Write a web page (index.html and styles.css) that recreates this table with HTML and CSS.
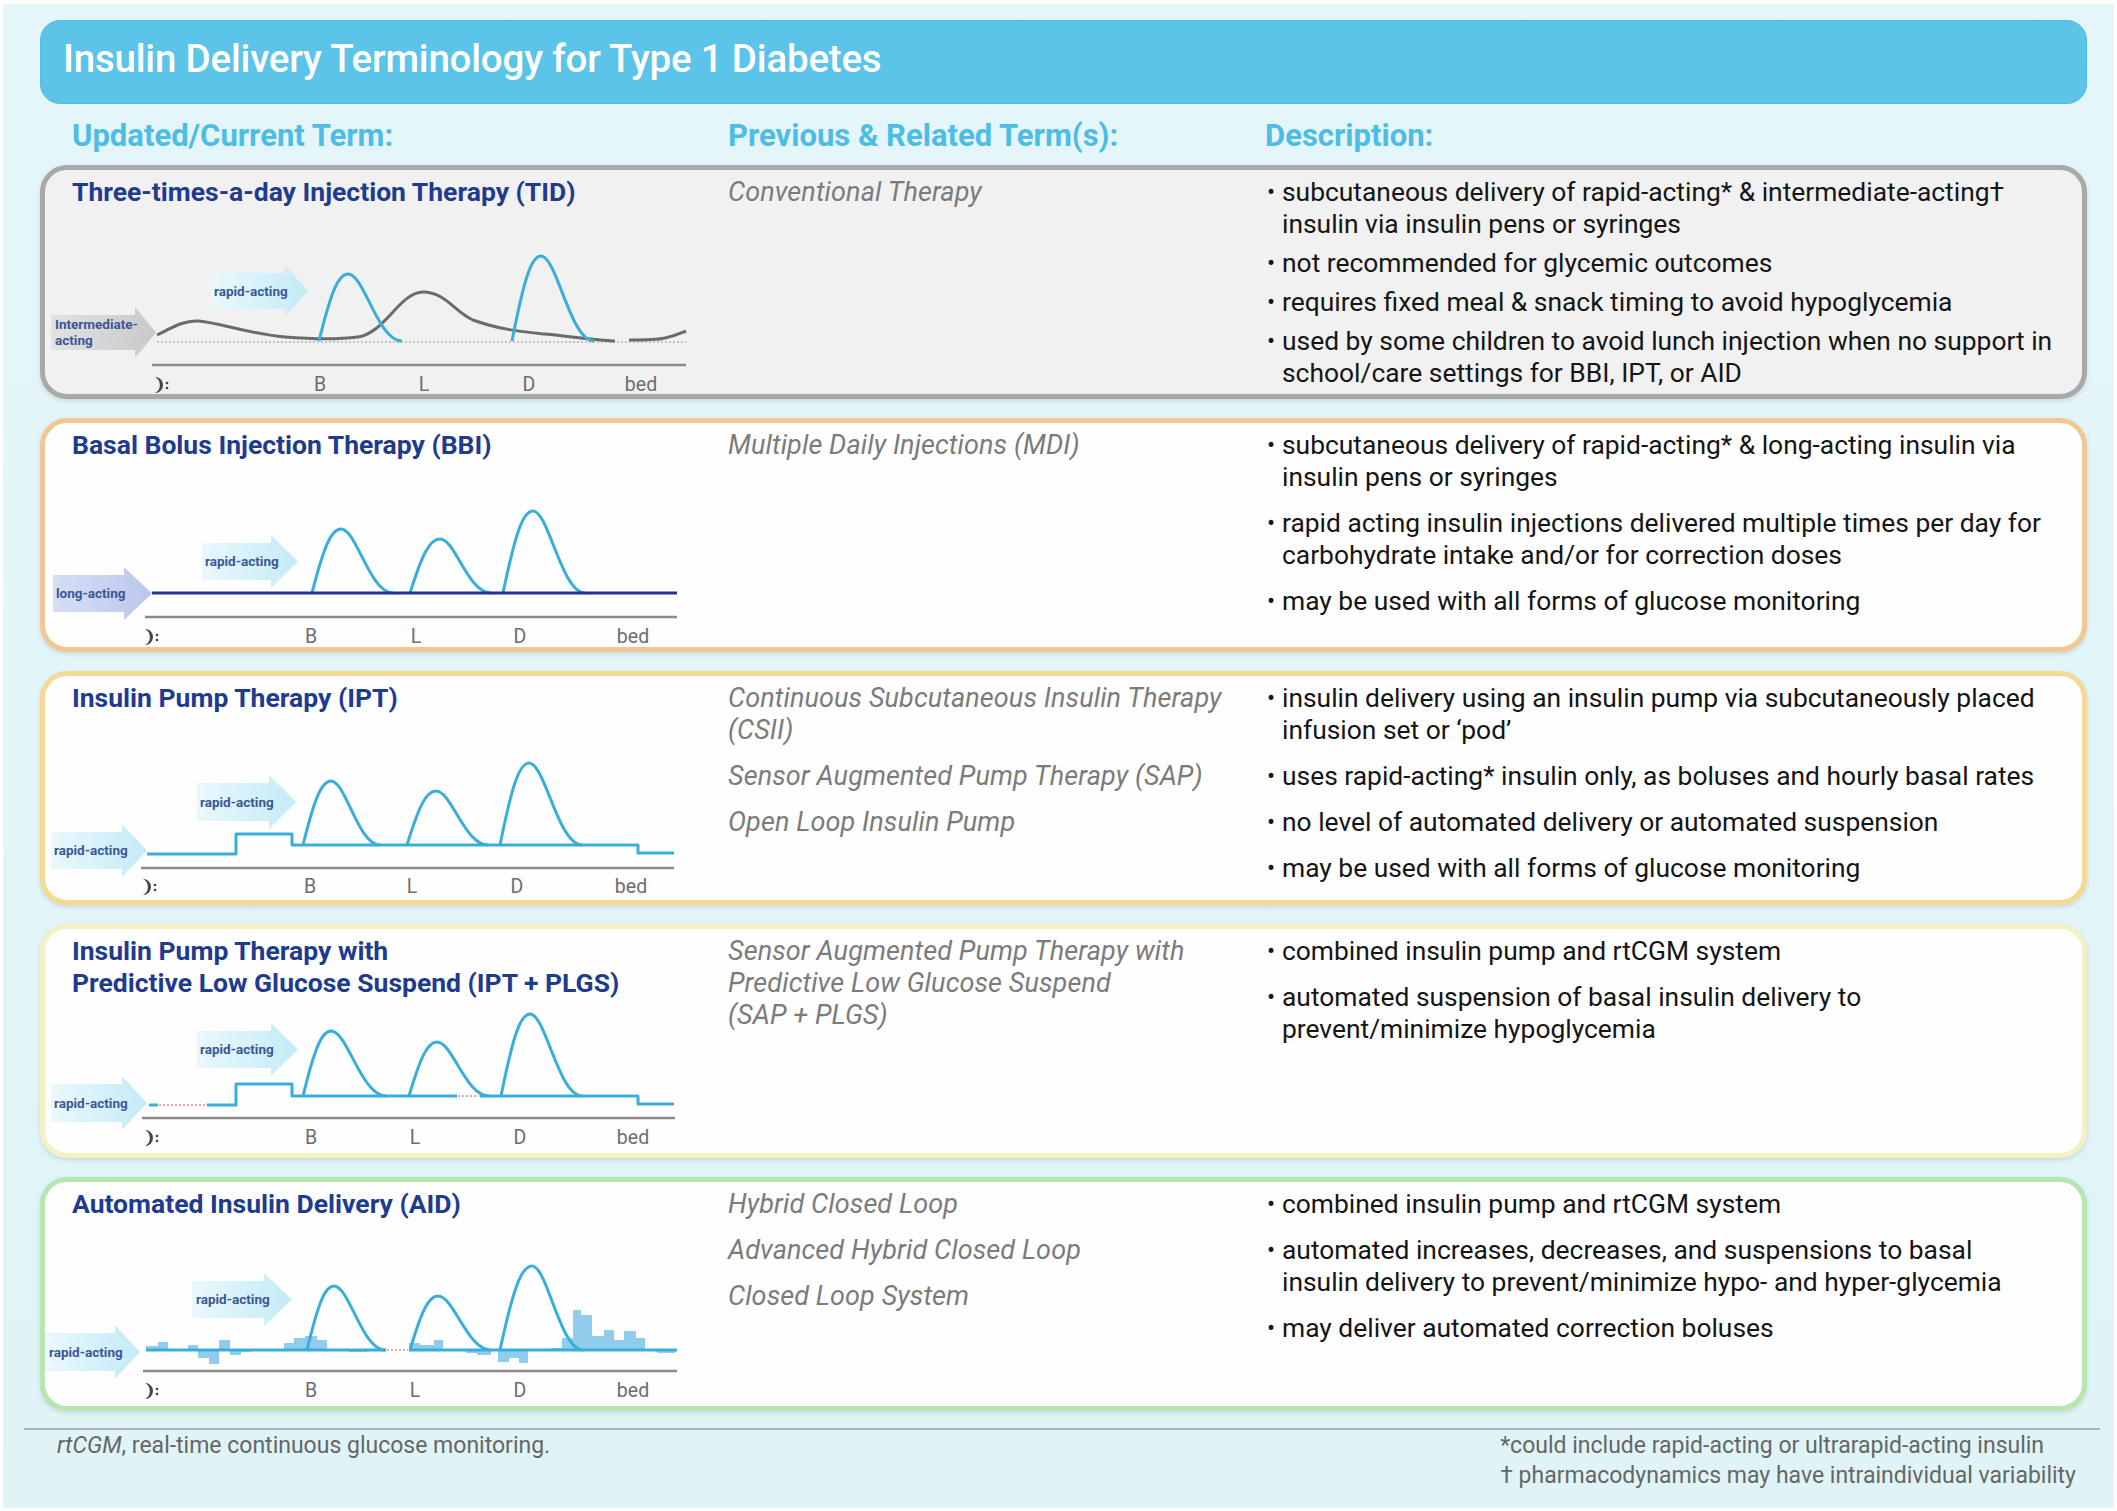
FILE: index.html
```html
<!DOCTYPE html>
<html lang="en">
  <head>
    <meta charset="UTF-8" />
    <meta name="viewport" content="width=device-width, initial-scale=1.0" />
    <title>Insulin Delivery Terminology for Type 1 Diabetes</title>
    <link rel="stylesheet" href="styles.css">
  </head>
  <body>
    <!-- shared gradients for the chart arrows -->
    <svg class="svg-defs" aria-hidden="true">
      <defs>
        <linearGradient id="g-rapid" x1="0" x2="1" y1="0" y2="0">
          <stop offset="0" stop-color="#eaf8fc" />
          <stop offset="1" stop-color="#c3ebf7" />
        </linearGradient>
        <linearGradient id="g-grey" x1="0" x2="1" y1="0" y2="0">
          <stop offset="0" stop-color="#e2e2e2" />
          <stop offset="1" stop-color="#c9c9c9" />
        </linearGradient>
        <linearGradient id="g-long" x1="0" x2="1" y1="0" y2="0">
          <stop offset="0" stop-color="#d7def5" />
          <stop offset="1" stop-color="#bac7ee" />
        </linearGradient>
      </defs>
    </svg>

    <div class="sheet">
      <div class="board">
        <header class="title-bar">
          <h1>Insulin Delivery Terminology for Type 1 Diabetes</h1>
        </header>

        <div class="col-heads">
          <h2>Updated/Current Term:</h2>
          <h2>Previous &amp; Related Term(s):</h2>
          <h2>Description:</h2>
        </div>

        <div class="rows">
          <!-- TID -->
          <section class="row row-tid">
            <div class="term">
              <h3>Three-times-a-day Injection Therapy (TID)</h3>
              <svg class="chart" viewBox="0 0 660 156" width="660" height="156">
                <polygon class="arrow" fill="url(#g-grey)" points="6,75 90,75 90,67 111,92.5 90,118 90,110 6,110" />
                <text class="arrow-text" x="10" y="89">Intermediate-</text>
                <text class="arrow-text" x="10" y="105">acting</text>
                <polygon class="arrow" fill="url(#g-rapid)" points="166,33 240,33 240,25 263,51 240,77 240,69 166,69" />
                <text class="arrow-text" x="169" y="55.5">rapid-acting</text>
                <line class="dots" x1="112" y1="102" x2="641" y2="102" />
                <path class="grey-curve" d="M112,95 C130,86 140,80 154,81 C175,83 200,93 240,97 C265,99 290,100 313,97 C340,93 355,52 378,52 C400,52 410,72 428,80 C455,90 480,92 500,94 C530,97 550,100 570,101 M584,100 C600,100 612,100 620,98 C630,96 636,93 641,91" />
                <path class="peak" d="M274,101 C285.6,54 292.8,34 303,34 C319.2,34 332.7,101 357,101" />
                <path class="peak" d="M467,101 C478.6,41.5 485.9,16 496,16 C511.9,16 525.2,101 549,101" />
                <line class="axis" x1="107" y1="125" x2="641" y2="125" />
                <g transform="translate(114,145)">
                  <path class="moon" d="M-4,-8 A8,8 0 1,1 -4,8 A9,9 0 0,0 -4,-8 Z" />
                  <circle class="moon" cx="8" cy="-2" r="1.3" />
                  <circle class="moon" cx="8" cy="3" r="1.3" />
                </g>
                <text class="tick" x="275" y="151">B</text>
                <text class="tick" x="379" y="151">L</text>
                <text class="tick" x="484" y="151">D</text>
                <text class="tick" x="596" y="151">bed</text>
              </svg>
            </div>
            <div class="prev">
              <p>Conventional Therapy</p>
            </div>
            <div class="desc">
              <ul>
                <li><span>subcutaneous delivery of rapid-acting* &amp; intermediate-acting†<br>insulin via insulin pens or syringes</span></li>
                <li><span>not recommended for glycemic outcomes</span></li>
                <li><span>requires fixed meal &amp; snack timing to avoid hypoglycemia</span></li>
                <li><span>used by some children to avoid lunch injection when no support in<br>school/care settings for BBI, IPT, or AID</span></li>
              </ul>
            </div>
          </section>

          <!-- BBI -->
          <section class="row row-bbi">
            <div class="term">
              <h3>Basal Bolus Injection Therapy (BBI)</h3>
              <svg class="chart" viewBox="0 0 660 156" width="660" height="156">
                <polygon class="arrow" fill="url(#g-long)" points="8,82 79,82 79,74 107,100.5 79,127 79,119 8,119" />
                <text class="arrow-text" x="11" y="105">long-acting</text>
                <polygon class="arrow" fill="url(#g-rapid)" points="157,50 226,50 226,42 253,68.5 226,95 226,87 157,87" />
                <text class="arrow-text" x="160" y="73">rapid-acting</text>
                <path class="peak" d="M267,100 C278.6,55.2 285.9,36 296,36 C311.6,36 324.6,100 348,100" />
                <path class="peak" d="M365,100 C377,62.2 384.5,46 395,46 C410.3,46 423,100 446,100" />
                <path class="peak" d="M458,100 C470,42.6 477.5,18 488,18 C503.6,18 516.6,100 540,100" />
                <line class="basal-long" x1="107" y1="100" x2="632" y2="100" />
                <line class="axis" x1="100" y1="124" x2="632" y2="124" />
                <g transform="translate(104,144)">
                  <path class="moon" d="M-4,-8 A8,8 0 1,1 -4,8 A9,9 0 0,0 -4,-8 Z" />
                  <circle class="moon" cx="8" cy="-2" r="1.3" />
                  <circle class="moon" cx="8" cy="3" r="1.3" />
                </g>
                <text class="tick" x="266" y="150">B</text>
                <text class="tick" x="371" y="150">L</text>
                <text class="tick" x="475" y="150">D</text>
                <text class="tick" x="588" y="150">bed</text>
              </svg>
            </div>
            <div class="prev">
              <p>Multiple Daily Injections (MDI)</p>
            </div>
            <div class="desc">
              <ul>
                <li><span>subcutaneous delivery of rapid-acting* &amp; long-acting insulin via<br>insulin pens or syringes</span></li>
                <li><span>rapid acting insulin injections delivered multiple times per day for<br>carbohydrate intake and/or for correction doses</span></li>
                <li><span>may be used with all forms of glucose monitoring</span></li>
              </ul>
            </div>
          </section>

          <!-- IPT -->
          <section class="row row-ipt">
            <div class="term">
              <h3>Insulin Pump Therapy (IPT)</h3>
              <svg class="chart" viewBox="0 0 660 156" width="660" height="156">
                <polygon class="arrow" fill="url(#g-rapid)" points="6,86 77,86 77,78 102,104.5 77,131 77,123 6,123" />
                <text class="arrow-text" x="9" y="109">rapid-acting</text>
                <polygon class="arrow" fill="url(#g-rapid)" points="152,37 224,37 224,29 251,56 224,83 224,75 152,75" />
                <text class="arrow-text" x="155" y="60.5">rapid-acting</text>
                <path class="peak" d="M258,99 C269.2,54.2 276.2,35 286,35 C300.7,35 313,99 335,99" />
                <path class="peak" d="M362,99 C373.6,61.2 380.9,45 391,45 C406.6,45 419.6,99 443,99" />
                <path class="peak" d="M455,99 C466.6,41.6 473.9,17 484,17 C499.9,17 513.2,99 537,99" />
                <path class="basal" d="M102,108 H191 V88 H247 V99 H593 V107 H629" />
                <line class="axis" x1="96" y1="122" x2="629" y2="122" />
                <g transform="translate(102,141)">
                  <path class="moon" d="M-4,-8 A8,8 0 1,1 -4,8 A9,9 0 0,0 -4,-8 Z" />
                  <circle class="moon" cx="8" cy="-2" r="1.3" />
                  <circle class="moon" cx="8" cy="3" r="1.3" />
                </g>
                <text class="tick" x="265" y="147">B</text>
                <text class="tick" x="367" y="147">L</text>
                <text class="tick" x="472" y="147">D</text>
                <text class="tick" x="586" y="147">bed</text>
              </svg>
            </div>
            <div class="prev">
              <p>Continuous Subcutaneous Insulin Therapy<br>(CSII)</p>
              <p>Sensor Augmented Pump Therapy (SAP)</p>
              <p>Open Loop Insulin Pump</p>
            </div>
            <div class="desc">
              <ul>
                <li><span>insulin delivery using an insulin pump via subcutaneously placed<br>infusion set or ‘pod’</span></li>
                <li><span>uses rapid-acting* insulin only, as boluses and hourly basal rates</span></li>
                <li><span>no level of automated delivery or automated suspension</span></li>
                <li><span>may be used with all forms of glucose monitoring</span></li>
              </ul>
            </div>
          </section>

          <!-- IPT + PLGS -->
          <section class="row row-plgs">
            <div class="term">
              <h3>Insulin Pump Therapy with<br>Predictive Low Glucose Suspend (IPT + PLGS)</h3>
              <svg class="chart" viewBox="0 0 660 156" width="660" height="156">
                <polygon class="arrow" fill="url(#g-rapid)" points="6,85 77,85 77,77 102,104 77,131 77,123 6,123" />
                <text class="arrow-text" x="9" y="108.5">rapid-acting</text>
                <polygon class="arrow" fill="url(#g-rapid)" points="152,32 226,32 226,24 253,50.5 226,77 226,69 152,69" />
                <text class="arrow-text" x="155" y="55">rapid-acting</text>
                <path class="peak" d="M258,97 C269.2,51.5 276.2,32 286,32 C302.5,32 316.3,97 341,97" />
                <path class="peak" d="M364,97 C375.2,59.2 382.2,43 392,43 C407.6,43 420.6,97 444,97" />
                <path class="peak" d="M456,97 C467.6,39.6 474.9,15 485,15 C500.6,15 513.6,97 537,97" />
                <path class="basal" d="M104,106 H113 M162,106 H191 V85 H247 V97 H412 M435,97 H593 V105 H629" />
                <line class="suspend" x1="114" y1="106" x2="161" y2="106" />
                <line class="suspend" x1="413" y1="97" x2="434" y2="97" />
                <line class="axis" x1="97" y1="119" x2="630" y2="119" />
                <g transform="translate(104,139)">
                  <path class="moon" d="M-4,-8 A8,8 0 1,1 -4,8 A9,9 0 0,0 -4,-8 Z" />
                  <circle class="moon" cx="8" cy="-2" r="1.3" />
                  <circle class="moon" cx="8" cy="3" r="1.3" />
                </g>
                <text class="tick" x="266" y="145">B</text>
                <text class="tick" x="370" y="145">L</text>
                <text class="tick" x="475" y="145">D</text>
                <text class="tick" x="588" y="145">bed</text>
              </svg>
            </div>
            <div class="prev">
              <p>Sensor Augmented Pump Therapy with<br>Predictive Low Glucose Suspend<br>(SAP + PLGS)</p>
            </div>
            <div class="desc">
              <ul>
                <li><span>combined insulin pump and rtCGM system</span></li>
                <li><span>automated suspension of basal insulin delivery to<br>prevent/minimize hypoglycemia</span></li>
              </ul>
            </div>
          </section>

          <!-- AID -->
          <section class="row row-aid">
            <div class="term">
              <h3>Automated Insulin Delivery (AID)</h3>
              <svg class="chart" viewBox="0 0 660 156" width="660" height="156">
                <polygon class="arrow" fill="url(#g-rapid)" points="0,81 70,81 70,73 95,100 70,127 70,119 0,119" />
                <text class="arrow-text" x="4" y="104.5">rapid-acting</text>
                <polygon class="arrow" fill="url(#g-rapid)" points="147,29 219,29 219,21 247,47.5 219,74 219,66 147,66" />
                <text class="arrow-text" x="151" y="52">rapid-acting</text>
                <g class="bars">
                  <rect x="101" y="94" width="12" height="4" />
                  <rect x="113" y="90" width="10" height="8" />
                  <rect x="143" y="93" width="10" height="5" />
                  <rect x="153" y="98" width="11" height="8" />
                  <rect x="164" y="98" width="10" height="14" />
                  <rect x="174" y="88" width="11" height="10" />
                  <rect x="185" y="98" width="11" height="5" />
                  <rect x="196" y="98" width="9" height="2" />
                  <rect x="239" y="91" width="10" height="7" />
                  <rect x="249" y="86" width="11" height="12" />
                  <rect x="260" y="84" width="12" height="14" />
                  <rect x="272" y="88" width="10" height="10" />
                  <rect x="304" y="98" width="18" height="2" />
                  <rect x="364" y="91" width="11" height="7" />
                  <rect x="375" y="93" width="14" height="5" />
                  <rect x="389" y="88" width="9" height="10" />
                  <rect x="421" y="98" width="11" height="3" />
                  <rect x="432" y="98" width="14" height="5" />
                  <rect x="453" y="98" width="11" height="12" />
                  <rect x="464" y="98" width="10" height="8" />
                  <rect x="474" y="98" width="9" height="13" />
                  <rect x="506" y="96" width="11" height="2" />
                  <rect x="517" y="86" width="11" height="12" />
                  <rect x="528" y="58" width="8" height="40" />
                  <rect x="536" y="63" width="11" height="35" />
                  <rect x="547" y="84" width="12" height="14" />
                  <rect x="559" y="78" width="10" height="20" />
                  <rect x="569" y="88" width="10" height="10" />
                  <rect x="579" y="79" width="12" height="19" />
                  <rect x="591" y="86" width="9" height="12" />
                  <rect x="612" y="98" width="18" height="3" />
                </g>
                <path class="peak" d="M262,98 C272.8,53.2 279.6,34 289,34 C304.3,34 317.1,98 340,98" />
                <path class="peak" d="M365,98 C376.2,60.2 383.2,44 393,44 C408.9,44 422.2,98 446,98" />
                <path class="peak" d="M455,98 C467.8,39.2 475.8,14 487,14 C502.3,14 515.1,98 538,98" />
                <path class="basal" d="M101,98 H341 M364,98 H632" />
                <line class="suspend" x1="342" y1="98" x2="363" y2="98" />
                <line class="axis" x1="98" y1="119" x2="632" y2="119" />
                <g transform="translate(104,139)">
                  <path class="moon" d="M-4,-8 A8,8 0 1,1 -4,8 A9,9 0 0,0 -4,-8 Z" />
                  <circle class="moon" cx="8" cy="-2" r="1.3" />
                  <circle class="moon" cx="8" cy="3" r="1.3" />
                </g>
                <text class="tick" x="266" y="145">B</text>
                <text class="tick" x="370" y="145">L</text>
                <text class="tick" x="475" y="145">D</text>
                <text class="tick" x="588" y="145">bed</text>
              </svg>
            </div>
            <div class="prev">
              <p>Hybrid Closed Loop</p>
              <p>Advanced Hybrid Closed Loop</p>
              <p>Closed Loop System</p>
            </div>
            <div class="desc">
              <ul>
                <li><span>combined insulin pump and rtCGM system</span></li>
                <li><span>automated increases, decreases, and suspensions to basal<br>insulin delivery to prevent/minimize hypo- and hyper-glycemia</span></li>
                <li><span>may deliver automated correction boluses</span></li>
              </ul>
            </div>
          </section>
        </div>
      </div>

      <footer class="foot">
        <p><em>rtCGM</em>, real-time continuous glucose monitoring.</p>
        <div class="notes">
          <p>*could include rapid-acting or ultrarapid-acting insulin</p>
          <p>† pharmacodynamics may have intraindividual variability</p>
        </div>
      </footer>
    </div>
  </body>
</html>
```

FILE: styles.css
```css
* {
  margin: 0;
  padding: 0;
  box-sizing: border-box;
}
body {
  font-family: Roboto, "Liberation Sans", Arial, sans-serif;
  background: #fff;
}
.svg-defs {
  display: block;
  width: 0;
  height: 0;
  overflow: hidden;
}
.sheet {
  margin: 4px 3px 3px;
  min-height: 1504px;
  padding: 16px 14px 14px 21px;
  background: linear-gradient(180deg, #e4f6f9 0%, #e0f4f7 100%);
}
.board {
  margin: 0 13px 0 16px;
}
.title-bar {
  height: 84px;
  display: flex;
  align-items: center;
  padding: 0 0 8px 22px;
  background: #5cc4e9;
  border: 1px solid #52bde3;
  border-radius: 20px;
}
.title-bar h1 {
  color: #fff;
  font-size: 38.5px;
  font-weight: 500;
  letter-spacing: -0.2px;
}
.col-heads {
  display: grid;
  grid-template-columns: 683px 537px 1fr;
  padding: 14px 5px 11px;
  line-height: 36px;
}
.col-heads h2 {
  font-size: 31px;
  font-weight: 700;
  color: #4dbde6;
}
.col-heads h2:first-child {
  padding-left: 27px;
}
.rows {
  display: flex;
  flex-direction: column;
  gap: 19px;
}
.row {
  display: grid;
  grid-template-columns: 683px 537px 1fr;
  height: 234px;
  padding-top: 6px;
  background: #fefefe;
  border: 5px solid #ccc;
  border-radius: 27px;
  box-shadow: 0 2px 5px rgba(0, 0, 0, 0.12);
}
.row-tid {
  background: #f1f1f1;
  border-color: #a9a9a9;
}
.row-bbi {
  border-color: #f3c795;
}
.row-ipt {
  border-color: #f5d995;
}
.row-plgs {
  border-color: #f4f1c2;
}
.row-aid {
  border-color: #b8e6b0;
}
.term h3 {
  min-height: 64px;
  padding-left: 27px;
  font-size: 26.5px;
  line-height: 32px;
  font-weight: 700;
  color: #1f3b8f;
}
.chart {
  display: block;
  width: 660px;
  height: 156px;
  overflow: visible;
}
.prev p {
  font-size: 27px;
  line-height: 32px;
  font-style: italic;
  color: #7b7b7b;
  letter-spacing: 0.1px;
}
.prev p + p {
  margin-top: 14px;
}
.desc ul {
  list-style: none;
}
.desc li {
  display: flex;
  align-items: flex-start;
  padding-left: 2px;
  font-size: 26.4px;
  line-height: 32px;
  color: #151515;
  white-space: nowrap;
}
.desc li::before {
  content: "•";
  width: 15px;
  flex-shrink: 0;
  font-size: 24px;
  line-height: 32px;
}
.desc li + li {
  margin-top: 14px;
}
.row-tid .desc li + li {
  margin-top: 7px;
}

/* chart parts */
.arrow-text {
  font-family: Roboto, "Liberation Sans", Arial, sans-serif;
  font-size: 13.5px;
  font-weight: 700;
  fill: #3a5796;
}
.peak,
.basal {
  fill: none;
  stroke: #3aaedb;
  stroke-width: 3;
  stroke-linejoin: round;
}
.grey-curve {
  fill: none;
  stroke: #6b6b6b;
  stroke-width: 3;
}
.basal-long {
  stroke: #1f3590;
  stroke-width: 3;
}
.dots {
  stroke: #c4c4c4;
  stroke-width: 2;
  stroke-dasharray: 2 2;
}
.suspend {
  stroke: #e58b8b;
  stroke-width: 1.5;
  stroke-dasharray: 2 2;
}
.bars rect {
  fill: #84c6ea;
  opacity: 0.9;
}
.axis {
  stroke: #8a8a8a;
  stroke-width: 2.5;
}
.moon {
  fill: #444;
}
.tick {
  font-family: Roboto, "Liberation Sans", Arial, sans-serif;
  font-size: 19.5px;
  fill: #6d6d6d;
  text-anchor: middle;
}

.foot {
  display: flex;
  justify-content: space-between;
  margin-top: 17px;
  padding: 1px 24px 0 33px;
  border-top: 2px solid #a6b5b9;
  font-size: 23px;
  line-height: 30px;
  color: #666;
}
.foot .notes {
  white-space: nowrap;
}
```
